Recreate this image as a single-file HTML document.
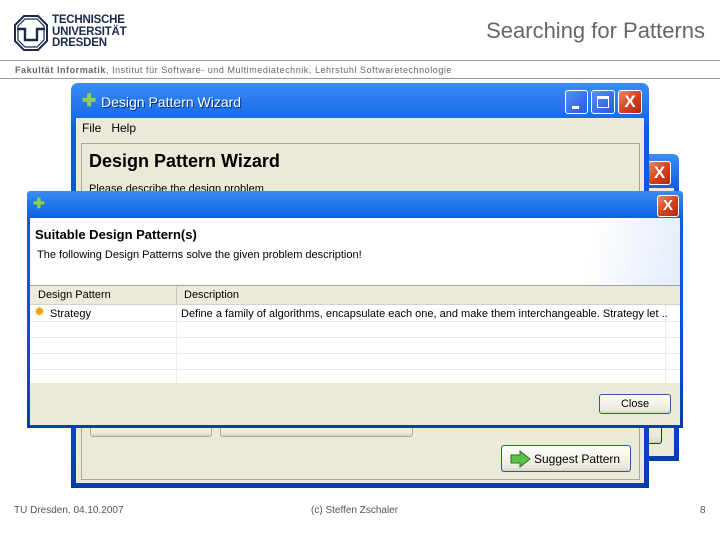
<!DOCTYPE html>
<html><head><meta charset="utf-8"><style>
*{margin:0;padding:0;box-sizing:border-box}
body{width:720px;height:540px;background:#fff;position:relative;overflow:hidden;font-family:"Liberation Sans",sans-serif}
.a{position:absolute}
.tb{background:linear-gradient(#3b8cf5 0%,#0a5ee0 12%,#0054e3 50%,#0047d0 85%,#0a3ca8 100%)}
.xb{background:linear-gradient(135deg,#e88a6a,#d1401c 55%,#b02a10);border:1px solid #fff;border-radius:3px;color:#fff;font-size:17px;font-weight:bold;text-align:center}
.bb{background:linear-gradient(135deg,#5d8ef5,#2459e0);border:1px solid #fff;border-radius:3px}
.face{background:#ece9d8}
.btn{border:1px solid #003c74;border-radius:3px;background:linear-gradient(#fff,#ece9d8 85%,#d6d0c0);font-size:12px;text-align:center}
</style></head><body>
<!-- logo -->
<svg class="a" style="left:14px;top:15px" width="34" height="36" viewBox="0 0 34 36"><polygon points="10,1 24,1 33,10 33,26 24,35 10,35 1,26 1,10" fill="none" stroke="#1b2a4a" stroke-width="2"/><polygon points="11,4 23,4 30,11 30,25 23,32 11,32 4,25 4,11" fill="none" stroke="#1b2a4a" stroke-width="1.2"/><path d="M3 14 H11 V25 H23 V14 H31" fill="none" stroke="#1b2a4a" stroke-width="2.4"/></svg>
<div class="a" style="left:52px;top:15px;font-size:11.5px;line-height:11.5px;font-weight:bold;color:#1b2a4a;letter-spacing:-0.2px">TECHNISCHE<br>UNIVERSITÄT<br>DRESDEN</div>
<div class="a" style="right:15px;top:18px;font-size:22px;color:#666">Searching for Patterns</div>
<div class="a" style="left:0;top:60px;width:720px;height:1px;background:#999"></div>
<div class="a" style="left:15px;top:65px;font-size:9px;letter-spacing:0.55px;color:#666"><b>Fakultät Informatik</b>, Institut für Software- und Multimediatechnik, Lehrstuhl Softwaretechnologie</div>
<div class="a" style="left:0;top:78px;width:720px;height:1px;background:#999"></div>

<!-- middle window -->
<div class="a tb" style="left:90px;top:154px;width:589px;height:307px;border-radius:6px 6px 0 0"></div>
<div class="a face" style="left:95px;top:188px;width:579px;height:268px"></div>
<div class="a xb" style="left:648px;top:161px;width:23px;height:24px;line-height:22px">X</div>
<div class="a btn" style="left:640px;top:400px;width:22px;height:44px"></div>

<!-- back window -->
<div class="a tb" style="left:71px;top:83px;width:578px;height:405px;border-radius:7px 7px 0 0"></div>
<div class="a" style="left:82px;top:91px;color:#8fd04a;font-size:17px;font-weight:bold">✚</div>
<div class="a" style="left:101px;top:94px;color:#fff;font-size:14px;text-shadow:1px 1px #0a2a80">Design Pattern Wizard</div>
<div class="a bb" style="left:565px;top:90px;width:23px;height:24px"><div class="a" style="left:6px;top:15px;width:7px;height:3px;background:#fff"></div></div>
<div class="a bb" style="left:591px;top:90px;width:24px;height:24px"><div class="a" style="left:5px;top:5px;width:12px;height:12px;border:1px solid #fff;border-top-width:3px"></div></div>
<div class="a xb" style="left:618px;top:90px;width:24px;height:24px;line-height:22px">X</div>
<div class="a face" style="left:76px;top:118px;width:568px;height:365px"></div>
<div class="a" style="left:82px;top:121px;font-size:12px">File&nbsp;&nbsp;&nbsp;Help</div>
<div class="a" style="left:81px;top:143px;width:559px;height:337px;border:1px solid #aca899"></div>
<div class="a" style="left:89px;top:151px;font-size:18px;font-weight:bold">Design Pattern Wizard</div>
<div class="a" style="left:89px;top:183px;font-size:11px">Please describe the design problem</div>
<div class="a btn" style="left:90px;top:415px;width:122px;height:22px;border-color:#aaa"></div>
<div class="a btn" style="left:220px;top:415px;width:193px;height:22px;border-color:#aaa"></div>
<div class="a btn" style="left:501px;top:445px;width:130px;height:27px;border-color:#2a5aa8"><svg class="a" style="left:8px;top:4px" width="22" height="18"><path d="M1 5 H10 V1 L20 9 L10 17 V13 H1 Z" fill="#5ec04a" stroke="#2a7a1e"/></svg><span class="a" style="left:32px;top:6px">Suggest Pattern</span></div>

<!-- front dialog -->
<div class="a tb" style="left:27px;top:191px;width:656px;height:237px;border-radius:3px 3px 0 0"></div>
<div class="a" style="left:33px;top:195px;color:#8fd04a;font-size:14px;font-weight:bold">✚</div>
<div class="a xb" style="left:657px;top:195px;width:22px;height:22px;line-height:20px;font-size:15px">X</div>
<div class="a" style="left:30px;top:218px;width:650px;height:207px;background:#ece9d8"></div>
<div class="a" style="left:30px;top:218px;width:650px;height:67px;background:linear-gradient(100deg,#fff 85%,#e4ecf8)"></div>
<div class="a" style="left:35px;top:227px;font-size:13px;font-weight:bold">Suitable Design Pattern(s)</div>
<div class="a" style="left:37px;top:249px;font-size:11px">The following Design Patterns solve the given problem description!</div>
<div class="a" style="left:30px;top:285px;width:650px;height:1px;background:#a0a0a0"></div>
<div class="a" style="left:30px;top:286px;width:650px;height:97px;background:#fff"></div>
<div class="a" style="left:30px;top:286px;width:650px;height:19px;background:#ebeadb;border-bottom:1px solid #d6d3c4"></div>
<div class="a" style="left:38px;top:289px;font-size:11px">Design Pattern</div>
<div class="a" style="left:176px;top:287px;width:1px;height:17px;background:#c8c5b4"></div>
<div class="a" style="left:184px;top:289px;font-size:11px">Description</div>
<div class="a" style="left:176px;top:305px;width:1px;height:78px;background:#ecebe4"></div>
<div class="a" style="left:665px;top:305px;width:1px;height:78px;background:#ecebe4"></div>
<div class="a" style="left:30px;top:321px;width:650px;height:1px;background:#ecebe4"></div>
<div class="a" style="left:30px;top:337px;width:650px;height:1px;background:#ecebe4"></div>
<div class="a" style="left:30px;top:353px;width:650px;height:1px;background:#ecebe4"></div>
<div class="a" style="left:30px;top:369px;width:650px;height:1px;background:#ecebe4"></div>
<div class="a" style="left:34px;top:304px;font-size:13px;color:#f0a000">✹</div>
<div class="a" style="left:50px;top:308px;font-size:11px">Strategy</div>
<div class="a" style="left:181px;top:308px;font-size:11px">Define a family of algorithms, encapsulate each one, and make them interchangeable. Strategy let ..</div>
<div class="a btn" style="left:599px;top:394px;width:72px;height:20px;border-color:#2a5aa8;line-height:18px;font-size:11px">Close</div>

<!-- footer -->
<div class="a" style="left:14px;top:505px;font-size:10px;color:#555">TU Dresden, 04.10.2007</div>
<div class="a" style="left:311px;top:505px;font-size:10px;color:#555">(c) Steffen Zschaler</div>
<div class="a" style="left:700px;top:505px;font-size:10px;color:#555">8</div>
</body></html>
